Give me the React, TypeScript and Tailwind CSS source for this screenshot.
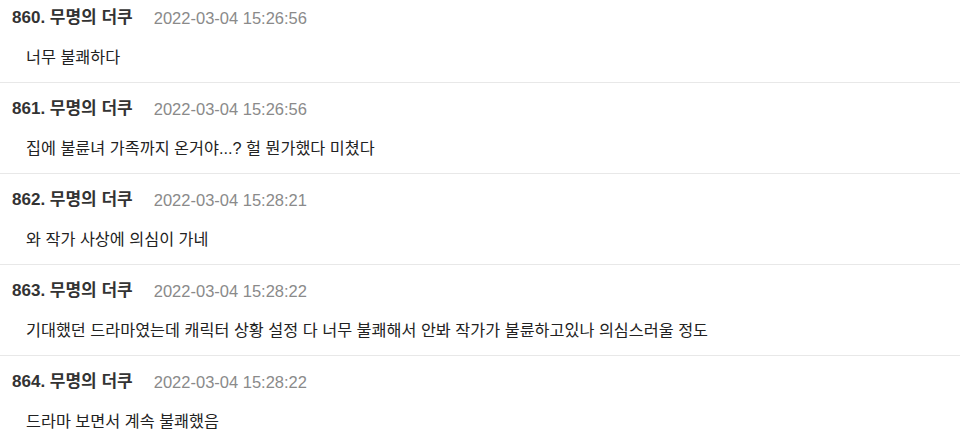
import React from "react";

const items = [
  { n: 860, date: "2022-03-04 15:26:56", text: "너무 불쾌하다" },
  { n: 861, date: "2022-03-04 15:26:56", text: "집에 불륜녀 가족까지 온거야...? 헐 뭔가했다 미쳤다" },
  { n: 862, date: "2022-03-04 15:28:21", text: "와 작가 사상에 의심이 가네" },
  { n: 863, date: "2022-03-04 15:28:22", text: "기대했던 드라마였는데 캐릭터 상황 설정 다 너무 불쾌해서 안봐 작가가 불륜하고있나 의심스러울 정도" },
  { n: 864, date: "2022-03-04 15:28:22", text: "드라마 보면서 계속 불쾌했음" },
];

export default function App() {
  return (
    <div
      className="w-[960px] h-[441px] overflow-hidden bg-white"
      style={{ fontFamily: '"Liberation Sans", "Noto Sans CJK KR", sans-serif' }}
    >
      <div className="-mt-[8px]">
        {items.map((it) => (
          <div key={it.n} className="border-b border-[#e8e8e8] pt-[17px] pb-[15px]">
            <div className="flex items-center h-[18px] pl-[12px]">
              <span className="text-[17px] leading-[18px] font-bold text-[#333333]">
                {it.n}. 무명의 더쿠
              </span>
              <span className="ml-[21px] text-[16.5px] leading-[18px] text-[#8a8a8a]">{it.date}</span>
            </div>
            <div className="mt-[20px] h-[20px] pl-[26px] text-[16.25px] leading-[20px] text-[#222222]">
              {it.text}
            </div>
          </div>
        ))}
      </div>
    </div>
  );
}
